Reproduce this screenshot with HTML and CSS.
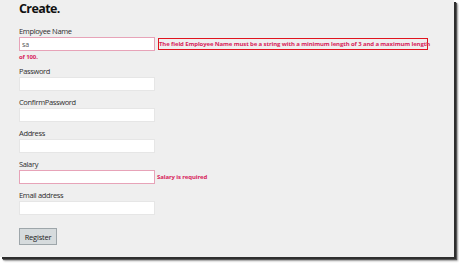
FILE: index.html
```html
<!DOCTYPE html>
<html>
<head>
<meta charset="utf-8">
<link rel="stylesheet" href="styles.css">
</head>
<body>
<div class="page">
  <h1 class="title">Create.</h1>
  <form class="form">
    <div class="field">
      <label class="label">Employee Name</label>
      <div class="row">
        <input class="input input-error" type="text" value="sa">
        <span class="err err-boxed">The field Employee Name must be a string with a minimum length of 3 and a maximum length</span>
      </div>
      <div class="err err-wrap">of 100.</div>
    </div>
    <div class="field">
      <label class="label">Password</label>
      <div class="row"><input class="input" type="password"></div>
    </div>
    <div class="field">
      <label class="label">ConfirmPassword</label>
      <div class="row"><input class="input" type="password"></div>
    </div>
    <div class="field">
      <label class="label">Address</label>
      <div class="row"><input class="input" type="text"></div>
    </div>
    <div class="field">
      <label class="label">Salary</label>
      <div class="row">
        <input class="input input-error" type="text">
        <span class="err err-inline">Salary is required</span>
      </div>
    </div>
    <div class="field">
      <label class="label">Email address</label>
      <div class="row"><input class="input" type="text"></div>
    </div>
    <button class="btn" type="button">Register</button>
  </form>
</div>
</body>
</html>
```
FILE: styles.css
```css
html, body {
  margin: 0;
  padding: 0;
  background: #ffffff;
  min-height: 264px;
}
.page {
  width: 454px;
  height: 257px;
  box-sizing: border-box;
  padding: 0 0 0 19px;
  background: #efefef;
  box-shadow: 2px 2px 0 #2e2e2e, 3px 3px 1px #555, 4px 4px 2px #aaa;
  font-family: "Open Sans", "Noto Sans", sans-serif;
  color: #333;
  overflow: hidden;
}
.title {
  margin: 0;
  height: 26px;
  font-size: 12.5px;
  line-height: 17px;
  letter-spacing: -0.6px;
  font-weight: 700;
  color: #111;
}
.form {
  display: block;
}
.field {
  margin-bottom: 6px;
}
.label {
  display: block;
  height: 11px;
  font-size: 7.5px;
  line-height: 11px;
  letter-spacing: -0.35px;
  color: #2e2e2e;
}
.row {
  display: flex;
  align-items: center;
  height: 14px;
}
.input {
  width: 136px;
  height: 14px;
  box-sizing: border-box;
  margin: 0;
  border: 1px solid #e6e6e6;
  background: #fff;
  padding: 0 2px;
  font-family: "Open Sans", sans-serif;
  font-size: 7px;
  color: #555;
  outline: none;
}
.input-error {
  border-color: #e7a3b8;
}
.err {
  color: #d8245c;
  font-weight: 700;
  font-size: 6px;
  letter-spacing: -0.12px;
}
.err-boxed {
  margin-left: 3px;
  width: 270px;
  height: 12px;
  box-sizing: border-box;
  border: 1px solid #e0141e;
  line-height: 10px;
  white-space: nowrap;
}
.err-wrap {
  height: 9px;
  line-height: 12px;
}
.err-inline {
  margin-left: 2px;
}
.btn {
  margin-top: 7px;
  width: 38px;
  height: 17px;
  padding: 0;
  border: 1px solid #9ea6aa;
  background: #d6dbdd;
  font-family: "Open Sans", sans-serif;
  font-size: 7.5px;
  letter-spacing: -0.2px;
  color: #222;
}
```
